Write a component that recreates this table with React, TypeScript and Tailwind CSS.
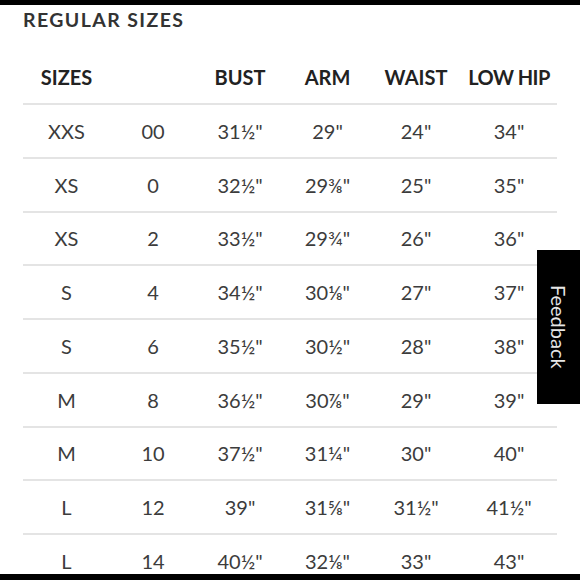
import React from "react";

const rows: string[][] = [
  ["XXS", "00", "31½\"", "29\"", "24\"", "34\""],
  ["XS", "0", "32½\"", "29⅜\"", "25\"", "35\""],
  ["XS", "2", "33½\"", "29¾\"", "26\"", "36\""],
  ["S", "4", "34½\"", "30⅛\"", "27\"", "37\""],
  ["S", "6", "35½\"", "30½\"", "28\"", "38\""],
  ["M", "8", "36½\"", "30⅞\"", "29\"", "39\""],
  ["M", "10", "37½\"", "31¼\"", "30\"", "40\""],
  ["L", "12", "39\"", "31⅝\"", "31½\"", "41½\""],
  ["L", "14", "40½\"", "32⅛\"", "33\"", "43\""],
];

const cols = "grid grid-cols-[87px_86px_88px_87px_90px_96px]";

export default function App() {
  return (
    <div
      className="relative w-[580px] h-[580px] overflow-hidden bg-white"
      style={{ fontFamily: "Lato, 'Open Sans', sans-serif" }}
    >
      <div className="h-[5px] bg-black" />
      <div className="pl-[23px] pt-[4px] h-[46px] text-[19.5px] font-bold tracking-[1.4px] text-[#333] leading-[22px]">
        REGULAR SIZES
      </div>
      <div className="ml-[23px] w-[534px]">
        <div className={`${cols} h-[54px] border-b-2 border-[#e4e4e4] items-center text-center text-[20px] font-bold text-[#222]`}>
          <div>SIZES</div>
          <div></div>
          <div>BUST</div>
          <div>ARM</div>
          <div>WAIST</div>
          <div className="tracking-[-0.5px]">LOW HIP</div>
        </div>
        {rows.map((r, i) => (
          <div
            key={i}
            className={`${cols} h-[53.75px] items-center text-center text-[20px] text-[#3c3c3c] border-b-2 border-[#e4e4e4]`}
          >
            {r.map((c, j) => (
              <div key={j}>{c}</div>
            ))}
          </div>
        ))}
      </div>
      <div className="absolute left-0 right-0 bottom-0 h-[6px] bg-black" />
      <div className="absolute left-[537px] top-[250px] w-[43px] h-[154px] bg-black flex items-center justify-center">
        <span className="text-[20px] text-[#e6e6e6] [writing-mode:vertical-rl] leading-none">Feedback</span>
      </div>
    </div>
  );
}
